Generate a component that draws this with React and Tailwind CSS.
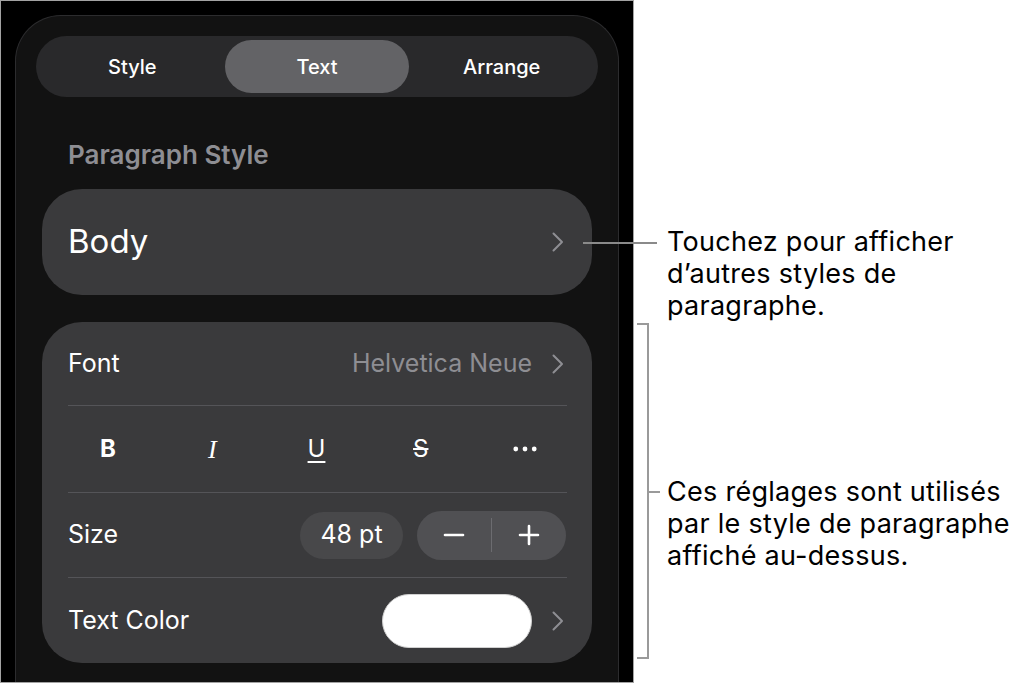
import React from "react";

const Chevron = () => (
  <svg width="14" height="22" viewBox="0 0 14 22" fill="none">
    <path d="M2.5 2.5 L11 11 L2.5 19.5" stroke="#8e8e93" strokeWidth="2" strokeLinecap="round" strokeLinejoin="round" />
  </svg>
);

const Divider = () => <div className="h-px bg-[#545458]" />;

const Callout = ({ lines }) => (
  <div className="text-[27px] leading-[32px] tracking-[0.01em] text-black font-['Inter',sans-serif]">
    {lines.map((l) => (
      <div key={l} className="whitespace-nowrap">{l}</div>
    ))}
  </div>
);

export default function App() {
  return (
    <div className="relative flex w-[1015px] h-[684px] bg-white font-['Inter','Noto_Sans',sans-serif] overflow-hidden">
      {/* Phone screenshot */}
      <div className="flex flex-col w-[634px] h-[683px] bg-black border border-[#a3a3a3] px-[14px] pt-[14px]">
        <div className="flex-1 flex flex-col bg-[#121212] border border-b-0 border-[#2c2c2e] rounded-t-[46px] px-[26px]">
          {/* Segmented control */}
          <div className="-mx-[6px] mt-[20px] h-[61px] rounded-full bg-[#29292b] p-[4px] flex">
            <div className="flex-1 flex items-center justify-center text-white text-[20px] font-medium">Style</div>
            <div className="flex-1 flex items-center justify-center text-white text-[20px] font-medium rounded-full bg-[#636366]">Text</div>
            <div className="flex-1 flex items-center justify-center text-white text-[20px] font-medium">Arrange</div>
          </div>

          {/* Paragraph Style */}
          <div className="mt-[43px] pl-[26px] text-[26px] leading-[30px] font-semibold text-[#8e8e93]">Paragraph Style</div>

          <div className="mt-[19px] h-[106px] rounded-[40px] bg-[#3a3a3c] flex items-center justify-between pl-[26px] pr-[27px]">
            <span className="text-white text-[33px]">Body</span>
            <Chevron />
          </div>

          {/* Settings card */}
          <div className="mt-[27px] rounded-[40px] bg-[#3a3a3c] pl-[26px] pr-[25px]">
            <div className="h-[83px] flex items-center justify-between pt-[1px]">
              <span className="text-white text-[25px]">Font</span>
              <div className="flex items-center gap-[19px] pr-[2px]">
                <span className="text-[#8e8e93] text-[25px]">Helvetica Neue</span>
                <Chevron />
              </div>
            </div>
            <Divider />
            <div className="h-[86px] flex items-center justify-between pl-[28px] pr-[30px] text-white">
              <span className="w-[24px] text-center font-bold text-[24px]">B</span>
              <span className="w-[24px] text-center italic font-['Liberation_Serif',serif] text-[26px]">I</span>
              <span className="w-[24px] text-center text-[24px] underline underline-offset-[4px] decoration-[2px]">U</span>
              <span className="w-[24px] text-center text-[24px] line-through decoration-[2px]">S</span>
              <span className="w-[24px] flex justify-center">
                <svg width="26" height="6" viewBox="0 0 26 6">
                  <circle cx="3" cy="3" r="2.6" fill="white" />
                  <circle cx="13" cy="3" r="2.6" fill="white" />
                  <circle cx="23" cy="3" r="2.6" fill="white" />
                </svg>
              </span>
            </div>
            <Divider />
            <div className="h-[84px] flex items-center justify-between">
              <span className="text-white text-[25px]">Size</span>
              <div className="flex items-center gap-[14px] pr-px">
                <div className="h-[47px] w-[103px] rounded-full bg-[#48484a] flex items-center justify-center text-white text-[25px]">48 pt</div>
                <div className="h-[49px] w-[149px] rounded-full bg-[#505053] flex items-center">
                  <div className="flex-1 flex justify-center">
                    <svg width="22" height="22" viewBox="0 0 22 22"><path d="M2 11 H20" stroke="white" strokeWidth="2.6" strokeLinecap="round" /></svg>
                  </div>
                  <div className="w-px h-[34px] bg-[#6c6c70]" />
                  <div className="flex-1 flex justify-center">
                    <svg width="22" height="22" viewBox="0 0 22 22"><path d="M2 11 H20 M11 2 V20" stroke="white" strokeWidth="2.6" strokeLinecap="round" /></svg>
                  </div>
                </div>
              </div>
            </div>
            <Divider />
            <div className="h-[85px] flex items-center justify-between">
              <span className="text-white text-[25px]">Text Color</span>
              <div className="flex items-center gap-[19px] pr-[2px]">
                <div className="h-[54px] w-[150px] rounded-full bg-white border border-[#d0d0d0]" />
                <Chevron />
              </div>
            </div>
          </div>
        </div>
      </div>

      {/* Annotations */}
      <div className="flex-1 flex flex-col pl-[33px]">
        <div className="mt-[226px]">
          <Callout lines={["Touchez pour afficher", "d’autres styles de", "paragraphe."]} />
        </div>
        <div className="mt-[154px]">
          <Callout lines={["Ces réglages sont utilisés", "par le style de paragraphe", "affiché au-dessus."]} />
        </div>
      </div>

      {/* Leader lines */}
      <div className="absolute left-[583px] top-[242px] w-[74px] h-[2px] bg-[#8a8a8a]" />
      <div className="absolute left-[637px] top-[323px] w-[12px] h-[336px] border-2 border-l-0 border-[#9a9a9a]" />
      <div className="absolute left-[649px] top-[491px] w-[11px] h-[2px] bg-[#9a9a9a]" />
    </div>
  );
}
